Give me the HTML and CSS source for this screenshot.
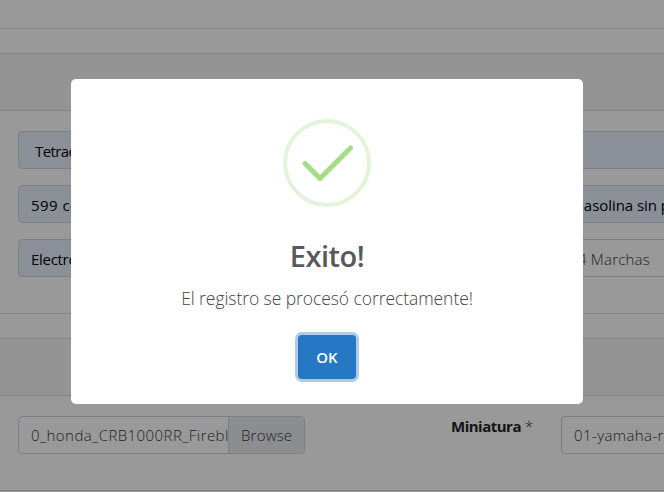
FILE: index.html
```html
<!DOCTYPE html>
<html lang="es">
<head>
<meta charset="utf-8">
<title>Registro</title>
<link rel="stylesheet" href="styles.css">
</head>
<body>
<main class="page">
  <div class="topbar"></div>
  <section class="card specs">
    <header class="card-header"></header>
    <div class="card-body">
      <div class="row"><div class="field filled indent">Tetracilindrica</div><div class="field filled wide"></div></div>
      <div class="row"><div class="field filled loose">599 cc</div><div class="field filled wide fuel">Gasolina sin plomo</div></div>
      <div class="row"><div class="field filled tight">Electronico</div><div class="field wide gears">4 Marchas</div></div>
    </div>
  </section>
  <section class="card files">
    <header class="card-header"></header>
    <div class="card-body">
      <div class="row">
        <div class="file"><span class="file-name">0_honda_CRB1000RR_Fireblade</span><span class="browse">Browse</span></div>
        <div class="label"><b>Miniatura</b> *</div>
        <div class="field wide thumb">01-yamaha-r6</div>
      </div>
    </div>
  </section>
</main>
<div class="overlay">
  <div class="modal" role="dialog">
    <svg class="icon" viewBox="0 0 88 88" width="88" height="88">
      <circle class="ring" cx="44" cy="44" r="42"/>
      <path class="check" d="M22 44.5 37 59.5 67.5 29"/>
    </svg>
    <h2 class="title">Exito!</h2>
    <p class="message">El registro se procesó correctamente!</p>
    <button class="ok">OK</button>
  </div>
</div>
</body>
</html>
```
FILE: styles.css
```css
* { box-sizing: border-box; }
body {
  margin: 0;
  width: 664px;
  height: 492px;
  overflow: hidden;
  background: #fff;
  font: 300 16px/24px "Open Sans", "Noto Sans", sans-serif;
  color: #343a40;
}
.page { height: 492px; overflow: hidden; }
.topbar { height: 29px; border-bottom: 1px solid #dadada; }
.card {
  margin-top: 24px;
  border: solid #dadada;
  border-width: 1px 0;
}
.card-header { height: 57px; background: #f7f7f7; border-bottom: 1px solid #dadada; }
.card-body { padding: 20px 0 0 18px; display: flex; flex-direction: column; gap: 16px; }
.specs { height: 261px; }
.files { height: 153px; }
.row { display: flex; height: 38px; }
.field {
  flex: none;
  width: 287px;
  height: 38px;
  padding: 7px 12px 0;
  border: 1px solid #ced4da;
  border-radius: 4px;
  white-space: nowrap;
  overflow: hidden;
  font-size: 15px;
}
.filled { background: #e8f0fe; color: #000; font-weight: 400; }
.indent { padding-left: 16px; letter-spacing: -.6px; }
.loose { letter-spacing: .45px; }
.tight { letter-spacing: -.3px; }
.wide { width: 287px; margin-left: 256px; }
.fuel { padding-left: 11px; letter-spacing: -.05px; }
.gears { padding-left: 16px; letter-spacing: .2px; }
.thumb { margin-left: 0; padding-top: 6px; letter-spacing: .4px; }
.file {
  flex: none;
  display: flex;
  width: 287px;
  border: 1px solid #ced4da;
  border-radius: 4px;
  overflow: hidden;
  font-size: 15px;
  line-height: 36px;
}
.file-name { width: 209px; padding-left: 12px; overflow: hidden; white-space: nowrap; letter-spacing: .43px; }
.browse { flex: 1; padding-left: 12px; border-left: 1px solid #ced4da; background: #e9ecef; letter-spacing: .2px; }
.label { flex: none; width: 256px; padding-left: 146px; font-size: 15px; line-height: 20px; color: #212529; }
.label b { font-weight: 700; letter-spacing: -.5px; }
.overlay {
  position: absolute;
  inset: 0;
  padding: 79px 0 0 71px;
  background: rgba(0, 0, 0, .4);
}
.modal {
  width: 512px;
  height: 325px;
  padding-top: 40px;
  border-radius: 5px;
  background: #fff;
  display: flex;
  flex-direction: column;
  align-items: center;
}
.icon { flex: none; }
.ring { fill: none; stroke: #a5dc86; stroke-opacity: .3; stroke-width: 4; }
.check { fill: none; stroke: #a5dc86; stroke-width: 5; stroke-linecap: round; stroke-linejoin: round; }
.title { margin: 29px 0 0; font-size: 29px; line-height: 40px; font-weight: 600; letter-spacing: -.5px; color: #595959; }
.message { margin: 9px 0 0; font-size: 17.5px; line-height: 26px; letter-spacing: -.07px; color: #454545; }
.ok {
  width: 58px;
  height: 44px;
  margin-top: 24px;
  padding: 0;
  border: 0;
  border-radius: 4px;
  background: #2778c4;
  box-shadow: 0 0 0 3px #b0cbe5;
  color: #fff;
  font: 600 15px "Open Sans", sans-serif;
}
```
